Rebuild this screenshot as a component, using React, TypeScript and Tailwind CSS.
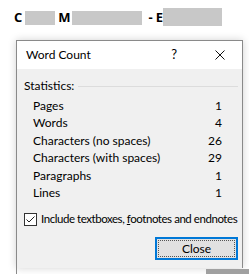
import React from "react";

const rows: [string, string][] = [
  ["Pages", "1"],
  ["Words", "4"],
  ["Characters (no spaces)", "26"],
  ["Characters (with spaces)", "29"],
  ["Paragraphs", "1"],
  ["Lines", "1"],
];

export default function App() {
  return (
    <div className="w-[249px] h-[274px] bg-white overflow-hidden flex flex-col">
      {/* header */}
      <div className="h-[26px] pt-[8px] pl-[14px] flex items-start font-['Open_Sans',sans-serif] font-bold text-[13px] text-black leading-[18px]">
        <span>C</span>
        <div className="ml-[3px] mt-[3px] w-[30px] h-[14px] bg-[#c8c8c8]" />
        <span className="ml-[3px]">M</span>
        <div className="ml-[1px] mt-[3px] w-[70px] h-[14px] bg-[#c8c8c8]" />
        <span className="ml-[7px]">-</span>
        <span className="ml-[3px]">E</span>
        <div className="w-[59px] h-[18px] bg-[#c8c8c8]" />
      </div>

      {/* dialog */}
      <div className="ml-[16px] mt-[14px] w-[227px] border border-b-0 border-[#8a8a8a] shadow-[0_0_8px_rgba(0,0,0,0.18)] font-['Segoe_UI','Lato','Noto_Sans',sans-serif] text-[12px] text-black">
        <div className="h-[28px] bg-white flex items-center pl-[9px]">
          <span>Word Count</span>
          <span className="ml-auto mr-[38px] text-[13px]">?</span>
          <svg width="10" height="10" viewBox="0 0 10 10" className="mr-[17px]">
            <path d="M0.5 0.5L9.5 9.5M9.5 0.5L0.5 9.5" stroke="#111" strokeWidth="1" />
          </svg>
        </div>
        <div className="bg-[#f0f0f0] pt-[9px] pb-[8px] flex flex-col">
          <div className="h-[16px] flex items-center pl-[7px] pr-[4px]">
            <span>Statistics:</span>
            <div className="flex-1 h-px bg-[#dcdcdc] ml-[4px]" />
          </div>
          <div className="mt-[3px] flex flex-col pl-[16px] pr-[20px]">
            {rows.map(([k, v]) => (
              <div key={k} className="h-[17.5px] flex items-center justify-between">
                <span>{k}</span>
                <span>{v}</span>
              </div>
            ))}
          </div>
          <div className="mt-[9px] h-[16px] flex items-center pl-[7px]">
            <div className="shrink-0 w-[13px] h-[13px] border border-[#333] bg-white flex items-center justify-center">
              <svg width="11" height="11" viewBox="0 0 11 11">
                <path d="M1.5 5.5L4 8L9.5 2.5" stroke="#222" strokeWidth="1" fill="none" />
              </svg>
            </div>
            <span className="ml-[4px] whitespace-nowrap text-[11.5px] tracking-[-0.45px]">
              Include textboxes, <span className="underline">f</span>ootnotes and endnotes
            </span>
          </div>
          <div className="mt-[10px] flex justify-end pr-[4px]">
            <div className="w-[83px] h-[23px] border-2 border-[#0078d7] bg-[#e1e1e1] p-[1px]">
              <div className="w-full h-full border border-dotted border-[#555] flex items-center justify-center">
                Close
              </div>
            </div>
          </div>
        </div>
      </div>
      <div className="flex-1 flex">
        <div className="ml-[16px] w-px bg-[#8a8a8a]" />
        <div className="ml-auto mt-[1px] w-[43px] bg-[#a0a0a0]" />
      </div>
    </div>
  );
}
